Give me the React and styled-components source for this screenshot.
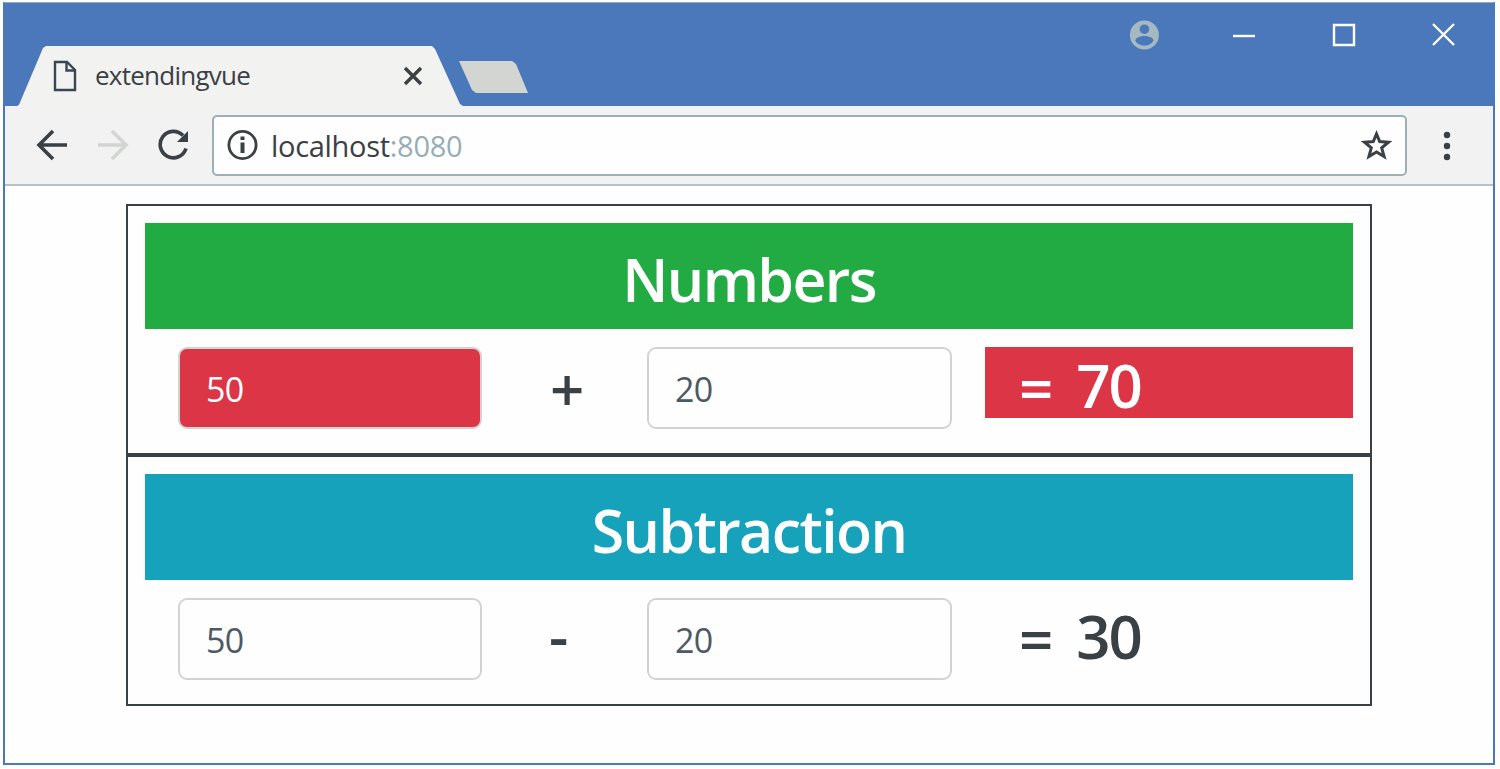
import React from "react";
import styled, { createGlobalStyle } from "styled-components";

const Global = createGlobalStyle`
  *, *::before, *::after { box-sizing: border-box; }
  body { margin: 0; background: #fefefe; font-family: "Open Sans", "Noto Sans", sans-serif; color: #3b4045; }
  h4 { margin: 0; }
`;

const Page = styled.div`
  height: 769px;
  padding: 2px 5px 4px 3px;
`;
const Window = styled.div`
  height: 763px;
  border: 2px solid #4a78bb;
  border-top: 1px solid #8faeba;
  display: flex;
  flex-direction: column;
`;
const TitleBar = styled.header`
  height: 103px;
  flex: none;
  background: #4a78bb;
  display: flex;
  align-items: flex-end;
`;
const Tab = styled.div`
  width: 448px;
  height: 61px;
  margin-left: 12px;
  padding: 0 42px 0 36px;
  background: #f2f2f1;
  clip-path: polygon(0 100%, 2px 98%, 26px 3px, 29px 1px, 415px 1px, 418px 4px, 443px 59px, 446px 100%);
  display: flex;
  align-items: center;
`;
const TabTitle = styled.span`
  flex: 1;
  margin: -2px 0 0 18px;
  font-size: 26px;
  font-weight: 500;
  line-height: 36px;
  letter-spacing: -0.75px;
`;
const NewTab = styled.div`
  width: 70px;
  height: 32px;
  margin: 0 0 13px -6px;
  background: #d2d5d2;
  clip-path: polygon(0 0, 53px 0, 57px 3px, 69px 100%, 17px 100%, 13px 29px);
`;
const WindowControls = styled.div`
  margin: 0 34px 56px auto;
  display: flex;
  align-items: center;
  gap: 70px;
`;
const Toolbar = styled.nav`
  height: 80px;
  flex: none;
  background: #f1f2f1;
  border-bottom: 2px solid #b5c1c2;
  display: flex;
  align-items: center;
  padding-left: 31px;
`;
const NavIcons = styled.div`
  width: 176px;
  display: flex;
  gap: 29px;
`;
const AddressBar = styled.div`
  width: 1195px;
  height: 61px;
  border: 2px solid #9bb1ba;
  border-radius: 5px;
  background: #fefefe;
  display: flex;
  align-items: center;
  padding: 0 12px 0 13px;
`;
const Url = styled.span`
  flex: 1;
  margin: 1px 0 0 12px;
  font-size: 29px;
  font-weight: 500;
  line-height: 40px;
  letter-spacing: -0.3px;
`;
const Port = styled.span`
  color: #98adb5;
  font-weight: 400;
`;
const MenuIcon = styled.svg`
  margin: 2px 0 0 35px;
`;
const Content = styled.main`
  flex: 1;
  padding: 18px 121px 0;
`;
const Panel = styled.section`
  height: 251px;
  border: 2px solid #3b4045;
  padding: 17px;
`;
const Heading = styled.h4`
  height: 106px;
  background: ${(p) => p.$color};
  color: #fefefe;
  font-size: 59px;
  font-weight: 600;
  line-height: 113px;
  letter-spacing: -1.6px;
  text-align: center;
`;
const Row = styled.div`
  display: grid;
  grid-template-columns: 304px 165px 305px 33px 368px;
  padding: 18px 0 0 33px;
  align-items: start;
`;
const NumberField = styled.input`
  width: 100%;
  height: 82px;
  border: 2px solid #d2d4d4;
  border-radius: 9px;
  padding: 2px 0 0 26px;
  font-family: inherit;
  font-size: 34px;
  letter-spacing: -0.8px;
  color: ${(p) => (p.$danger ? "#fefefe" : "#4d5965")};
  background: ${(p) => (p.$danger ? "#dc3545" : "#fefefe")};
  outline: 0;
`;
const Operator = styled.span`
  padding-left: ${(p) => p.$inset};
  font-size: 60px;
  font-weight: 600;
  line-height: ${(p) => p.$line};
`;
const Result = styled.h4`
  grid-column: 5;
  height: 71px;
  padding-left: 34px;
  display: flex;
  gap: 25px;
  font-size: 60px;
  font-weight: 600;
  line-height: 77px;
  letter-spacing: -2px;
  color: ${(p) => (p.$danger ? "#fefefe" : "#3b4045")};
  background: ${(p) => (p.$danger ? "#dc3545" : "transparent")};
`;
const EqualSign = styled.span`
  line-height: 82px;
`;

const FileIcon = () => (
  <svg width="24" height="32" viewBox="0 0 24 32" fill="none" stroke="#3b4652" strokeWidth="2.4">
    <path d="M2 2H14L22 10V30H2Z" />
    <path d="M13.5 2V10.5H22" />
  </svg>
);
const TabClose = () => (
  <svg width="20" height="20" viewBox="0 0 20 20" stroke="#3b4045" strokeWidth="3.4">
    <path d="M2 2L18 18M18 2L2 18" />
  </svg>
);
const BackIcon = () => (
  <svg width="32" height="32" viewBox="0 0 32 32" fill="none" stroke="#3b4045" strokeWidth="3.6">
    <path d="M31 16H3M17 2L3 16L17 30" />
  </svg>
);
const ForwardIcon = () => (
  <svg width="32" height="32" viewBox="0 0 32 32" fill="none" stroke="#d2d5d2" strokeWidth="3.6">
    <path d="M1 16H29M15 2L29 16L15 30" />
  </svg>
);
const ReloadIcon = () => (
  <svg width="32" height="32" viewBox="0 0 32 32" fill="none">
    <path d="M28 19.5A13.2 13.2 0 1 1 25 6.5" stroke="#3b4045" strokeWidth="3.6" />
    <path d="M30 2V13H19Z" fill="#3b4045" />
  </svg>
);
const InfoIcon = () => (
  <svg width="32" height="32" viewBox="0 0 32 32" fill="none" stroke="#3b4045">
    <circle cx="15.5" cy="16" r="13.6" strokeWidth="2.8" />
    <path d="M15.5 13.5V24" strokeWidth="4" />
    <path d="M15.5 7.5V11" strokeWidth="4" />
  </svg>
);
const StarIcon = () => (
  <svg width="32" height="32" viewBox="0 0 32 32" fill="none" stroke="#3b4045" strokeWidth="3">
    <path d="M15.5 4.9L18.7 12.6L27.5 13.2L20.7 18.8L23.1 27.6L15.5 23L7.9 27.6L10.3 18.8L3.5 13.2L12.3 12.6Z" />
  </svg>
);
const UserIcon = () => (
  <svg width="30" height="30" viewBox="0 0 30 30">
    <circle cx="15.4" cy="15" r="14.5" fill="#a5bac0" />
    <circle cx="15.4" cy="9.2" r="4.8" fill="#4a78bb" />
    <path d="M6.4 20.5C6.4 17.5 11.4 16 15.4 16S24.4 17.5 24.4 20.5C23 24 19.4 25.5 15.4 25.5S7.8 24 6.4 20.5Z" fill="#4a78bb" />
  </svg>
);
const ControlIcon = ({ d }) => (
  <svg width="30" height="30" viewBox="0 0 30 30" fill="none" stroke="#fefefe" strokeWidth="2.4">
    <path d={d} />
  </svg>
);

function Calculation({ title, color, operator, inset, line, result, danger }) {
  return (
    <Panel>
      <Heading $color={color}>{title}</Heading>
      <Row>
        <NumberField defaultValue="50" $danger={danger} />
        <Operator $inset={inset} $line={line}>{operator}</Operator>
        <NumberField defaultValue="20" />
        <Result $danger={danger}>
          <EqualSign>=</EqualSign>
          <span>{result}</span>
        </Result>
      </Row>
    </Panel>
  );
}

export default function App() {
  return (
    <Page>
      <Global />
      <Window>
        <TitleBar>
          <Tab>
            <FileIcon />
            <TabTitle>extendingvue</TabTitle>
            <TabClose />
          </Tab>
          <NewTab />
          <WindowControls>
            <UserIcon />
            <ControlIcon d="M4 16H26" />
            <ControlIcon d="M5 5H25V25H5Z" />
            <ControlIcon d="M4 4L25 25M25 4L4 25" />
          </WindowControls>
        </TitleBar>
        <Toolbar>
          <NavIcons>
            <BackIcon />
            <ForwardIcon />
            <ReloadIcon />
          </NavIcons>
          <AddressBar>
            <InfoIcon />
            <Url>localhost<Port>:8080</Port></Url>
            <StarIcon />
          </AddressBar>
          <MenuIcon width="10" height="32" viewBox="0 0 10 32" fill="#3b4045">
            <circle cx="5" cy="5" r="3.2" />
            <circle cx="5" cy="16" r="3.2" />
            <circle cx="5" cy="27" r="3.2" />
          </MenuIcon>
        </Toolbar>
        <Content>
          <Calculation title="Numbers" color="#22aa43" operator="+" inset="68px" line="84px" result="70" danger />
          <Calculation title="Subtraction" color="#15a2ba" operator="-" inset="67px" line="74px" result="30" />
        </Content>
      </Window>
    </Page>
  );
}
